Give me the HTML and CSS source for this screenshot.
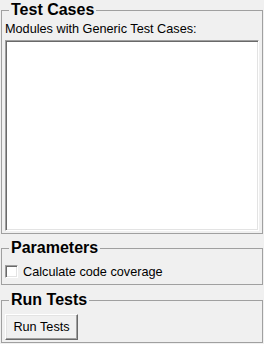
FILE: index.html
```html
<!DOCTYPE html>
<html lang="en">
<head>
    <meta charset="UTF-8">
    <meta name="viewport" content="width=device-width, initial-scale=1.0">
    <title>Test Cases</title>
    <link rel="stylesheet" href="styles.css">
</head>
<body>
    <div id="panel">
        <fieldset class="group" id="cases">
            <legend>Test Cases</legend>
            <p class="label">Modules with Generic Test Cases:</p>
            <div class="listbox"></div>
        </fieldset>
        <fieldset class="group" id="params">
            <legend>Parameters</legend>
            <label class="check">
                <span class="box"></span>
                <span>Calculate code coverage</span>
            </label>
        </fieldset>
        <fieldset class="group" id="run">
            <legend>Run Tests</legend>
            <button class="btn">Run Tests</button>
        </fieldset>
    </div>
</body>
</html>
```

FILE: styles.css
```css
*{
    margin: 0px;
    padding: 0px;
    box-sizing: border-box;
}
body{
    width: 264px;
    height: 344px;
    background: #f0f0f0;
    font-family: "Liberation Sans", Arial, sans-serif;
    font-size: 12.7px;
    color: #000000;
}
#panel{
    padding: 0 1px;
    display: flex;
    flex-direction: column;
}
.group{
    border: 1px solid #a0a0a0;
    padding: 0 3px 2px 3px;
    min-width: 0;
}
.group > legend{
    margin-left: 4px;
    padding: 0 2px;
    font-size: 16px;
    font-weight: bold;
    line-height: 20px;
}
#params{
    margin-top: 4px;
    padding-bottom: 6px;
}
#run{
    margin-top: 5px;
}
.label{
    line-height: 14px;
    margin-top: 2px;
}
.listbox{
    height: 191px;
    margin-top: 4px;
    background: #ffffff;
    border: 1px solid;
    border-color: #a0a0a0 #ffffff #ffffff #a0a0a0;
    box-shadow: inset 1px 1px 0 #696969, inset -1px -1px 0 #e3e3e3;
}
.check{
    display: flex;
    align-items: center;
    gap: 5px;
    height: 13px;
    margin-top: 7px;
}
.box{
    width: 13px;
    height: 13px;
    background: #ffffff;
    border: 1px solid;
    border-color: #a0a0a0 #ffffff #ffffff #a0a0a0;
    box-shadow: inset 1px 1px 0 #696969, inset -1px -1px 0 #e3e3e3;
}
.btn{
    display: block;
    width: 73px;
    height: 26px;
    margin-top: 4px;
    font-family: "Liberation Sans", Arial, sans-serif;
    font-size: 12.7px;
    color: #000000;
    background: #f0f0f0;
    border: 1px solid;
    border-color: #ffffff #696969 #696969 #ffffff;
    box-shadow: inset -1px -1px 0 #a0a0a0, inset 1px 1px 0 #e3e3e3;
}
```
